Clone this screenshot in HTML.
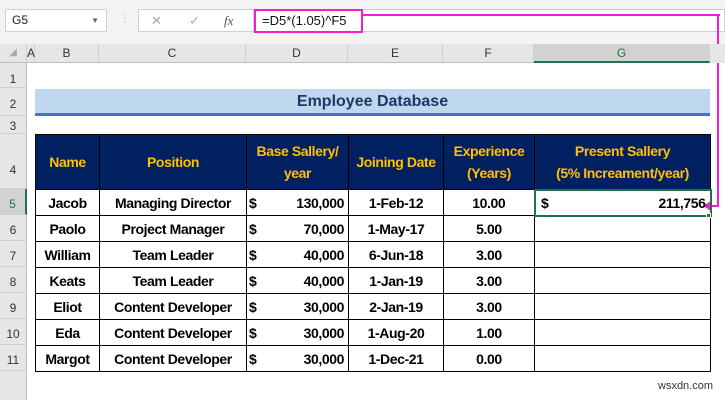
<!DOCTYPE html>
<html><head><style>
*{margin:0;padding:0;box-sizing:border-box}
body{width:725px;height:400px;background:#fff;position:relative;overflow:hidden;font-family:"Liberation Sans",sans-serif}
.a{position:absolute}
.rh{position:absolute;left:0;width:27px;background:#e6e6e6;border-bottom:1px solid #cfcfcf;border-right:1px solid #bdbdbd;font-size:12px;color:#333;text-align:center;padding-top:0}
.ch{position:absolute;top:44px;height:19px;background:#e6e6e6;border-right:1px solid #cfcfcf;border-bottom:1px solid #bdbdbd;font-size:12px;color:#333;text-align:center;line-height:18px}
table{position:absolute;left:35px;top:134px;border-collapse:collapse}
td{border:1px solid #000;font-size:14px;font-weight:bold;text-align:center;height:26px;padding:0 2px;letter-spacing:-0.4px;white-space:nowrap}
tr.h td{background:#002060;color:#ffc000;height:55px;line-height:22px}
.d{text-align:left;position:relative}
.d span{position:absolute;right:4px}
</style></head><body>
<div class="a" style="left:0;top:0;width:725px;height:44px;background:#f3f3f3"></div>
<div class="a" style="left:5px;top:9px;width:102px;height:23px;background:#fff;border:1px solid #d0d0d0;font-size:12px;line-height:21px;padding-left:6px;color:#222">G5<span style="position:absolute;right:7px;font-size:8px;color:#666">▼</span></div>
<div class="a" style="left:120px;top:13px;color:#aaa;font-size:10px">⋮</div>
<div class="a" style="left:138px;top:9px;width:116px;height:23px;background:#fff;border:1px solid #d0d0d0;font-size:13px;color:#aaa;line-height:21px"><span style="position:absolute;left:12px">✕</span><span style="position:absolute;left:50px">✓</span><span style="position:absolute;left:85px;color:#555;font-style:italic;font-family:'Liberation Serif',serif">fx</span></div>
<div class="a" style="left:254px;top:9px;width:471px;height:23px;background:#fff;border:1px solid #d0d0d0"></div>
<div class="a" style="left:254px;top:9px;width:109px;height:24px;border:2px solid #f01fd0;font-size:13px;line-height:20px;padding-left:6px;color:#111">=D5*(1.05)^F5</div>
<div class="a" style="left:363px;top:14px;width:357px;height:2px;background:#f01fd0"></div>
<div class="a" style="left:717px;top:14px;width:2px;height:193px;background:#f01fd0"></div>
<div class="a" style="left:708px;top:205px;width:11px;height:2px;background:#f01fd0"></div>
<div class="a" style="left:703px;top:201px;width:0;height:0;border-top:5px solid transparent;border-bottom:5px solid transparent;border-right:8px solid #f01fd0"></div>
<div class="a" style="left:0;top:44px;width:725px;height:19px;background:#e6e6e6"></div>
<div class="ch" style="left:0;width:27px;color:#aaa;font-size:10px">◢</div>
<div class="ch" style="left:27px;width:8px">A</div>
<div class="ch" style="left:35px;width:64px">B</div>
<div class="ch" style="left:99px;width:147px">C</div>
<div class="ch" style="left:246px;width:102px">D</div>
<div class="ch" style="left:348px;width:95px">E</div>
<div class="ch" style="left:443px;width:91px">F</div>
<div class="ch" style="left:534px;width:176px;background:#d2d2d2;border-bottom:2px solid #217346;color:#217346">G</div>
<div class="a" style="left:0;top:63px;width:27px;height:337px;background:#e6e6e6;border-right:1px solid #bdbdbd"></div>
<div class="rh" style="top:63px;height:25px;line-height:32px">1</div>
<div class="rh" style="top:88px;height:28px;line-height:32px">2</div>
<div class="rh" style="top:116px;height:18px;line-height:20px">3</div>
<div class="rh" style="top:134px;height:55px;line-height:72px">4</div>
<div class="rh" style="top:189px;height:26px;line-height:30px;background:#d2d2d2;color:#217346;border-right:2px solid #217346">5</div>
<div class="rh" style="top:215px;height:26px;line-height:30px">6</div>
<div class="rh" style="top:241px;height:26px;line-height:30px">7</div>
<div class="rh" style="top:267px;height:26px;line-height:30px">8</div>
<div class="rh" style="top:293px;height:26px;line-height:30px">9</div>
<div class="rh" style="top:319px;height:26px;line-height:30px">10</div>
<div class="rh" style="top:345px;height:26px;line-height:30px">11</div>
<div class="a" style="left:35px;top:89px;width:675px;height:24px;background:#bdd7ee;text-align:center;font-size:16px;font-weight:bold;color:#1f3864;line-height:25px">Employee Database</div>
<div class="a" style="left:35px;top:113px;width:675px;height:3px;background:#4472c4"></div>
<table>
<colgroup><col style="width:64px"><col style="width:147px"><col style="width:102px"><col style="width:95px"><col style="width:91px"><col style="width:176px"></colgroup>
<tr class="h"><td>Name</td><td>Position</td><td>Base Sallery/<br>year</td><td>Joining Date</td><td>Experience<br>(Years)</td><td>Present Sallery<br>(5% Increament/year)</td></tr>
<tr><td>Jacob</td><td>Managing Director</td><td class="d">$<span>130,000</span></td><td>1-Feb-12</td><td>10.00</td><td class="d" style="border:2px solid #217346">&nbsp;$<span>211,756</span></td></tr>
<tr><td>Paolo</td><td>Project Manager</td><td class="d">$<span>70,000</span></td><td>1-May-17</td><td>5.00</td><td></td></tr>
<tr><td>William</td><td>Team Leader</td><td class="d">$<span>40,000</span></td><td>6-Jun-18</td><td>3.00</td><td></td></tr>
<tr><td>Keats</td><td>Team Leader</td><td class="d">$<span>40,000</span></td><td>1-Jan-19</td><td>3.00</td><td></td></tr>
<tr><td>Eliot</td><td>Content Developer</td><td class="d">$<span>30,000</span></td><td>2-Jan-19</td><td>3.00</td><td></td></tr>
<tr><td>Eda</td><td>Content Developer</td><td class="d">$<span>30,000</span></td><td>1-Aug-20</td><td>1.00</td><td></td></tr>
<tr><td>Margot</td><td>Content Developer</td><td class="d">$<span>30,000</span></td><td>1-Dec-21</td><td>0.00</td><td></td></tr>
</table>
<div class="a" style="left:706px;top:213px;width:5px;height:5px;background:#217346;border:1px solid #fff"></div>
<div class="a" style="left:658px;top:380px;font-size:11px;color:#333">wsxdn.com</div>
</body></html>
